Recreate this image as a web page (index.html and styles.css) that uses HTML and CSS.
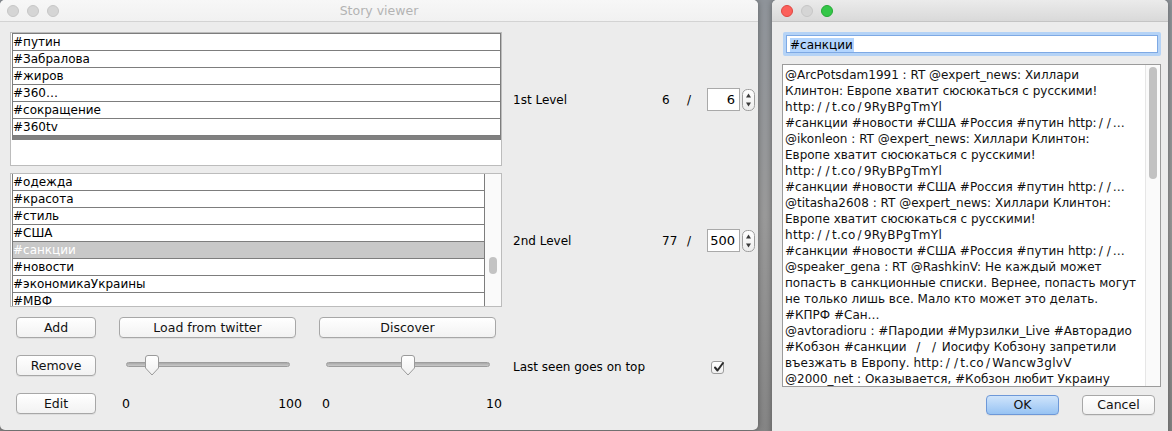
FILE: index.html
```html
<!DOCTYPE html>
<html>
<head>
<meta charset="utf-8">
<link rel="stylesheet" href="styles.css">
</head>
<body>
<div class="desktop">
  <div class="window main">
    <div class="titlebar">
      <div class="lights">
        <span class="light gray"></span><span class="light gray"></span><span class="light gray"></span>
      </div>
      <div class="title">Story viewer</div>
    </div>
    <div class="main-body">
      <div class="top-grid">
        <div class="list list-top">
          <div class="table">
            <div class="row">#путин</div>
            <div class="row">#Забралова</div>
            <div class="row">#жиров</div>
            <div class="row">#360…</div>
            <div class="row">#сокращение</div>
            <div class="row">#360tv</div>
            <div class="thick"></div>
          </div>
        </div>
        <div class="level">
          <span class="level-label">1st Level</span>
          <span class="level-num">6</span>
          <span class="level-slash">/</span>
          <span class="spin-field">6</span>
          <span class="spin-arrows"><svg width="13" height="22" viewBox="0 0 13 22"><rect x="0.5" y="0.5" width="12" height="21" rx="5" ry="5" fill="url(#sg1)" stroke="#9d9d9d"/><defs><linearGradient id="sg1" x1="0" y1="0" x2="0" y2="1"><stop offset="0" stop-color="#ffffff"/><stop offset="1" stop-color="#ececec"/></linearGradient></defs><path d="M6.5 4.5 L9 8.5 H4 Z" fill="#3a3a3a"/><path d="M6.5 17.5 L9 13.5 H4 Z" fill="#3a3a3a"/></svg></span>
        </div>
        <div class="list list-bottom">
          <div class="table table-scroll">
            <div class="row">#одежда</div>
            <div class="row">#красота</div>
            <div class="row">#стиль</div>
            <div class="row">#США</div>
            <div class="row selected">#санкции</div>
            <div class="row">#новости</div>
            <div class="row">#экономикаУкраины</div>
            <div class="row">#МВФ</div>
          </div>
          <div class="vscroll"><div class="vthumb"></div></div>
        </div>
        <div class="level">
          <span class="level-label">2nd Level</span>
          <span class="level-num">77</span>
          <span class="level-slash">/</span>
          <span class="spin-field">500</span>
          <span class="spin-arrows"><svg width="13" height="22" viewBox="0 0 13 22"><rect x="0.5" y="0.5" width="12" height="21" rx="5" ry="5" fill="url(#sg2)" stroke="#9d9d9d"/><defs><linearGradient id="sg2" x1="0" y1="0" x2="0" y2="1"><stop offset="0" stop-color="#ffffff"/><stop offset="1" stop-color="#ececec"/></linearGradient></defs><path d="M6.5 4.5 L9 8.5 H4 Z" fill="#3a3a3a"/><path d="M6.5 17.5 L9 13.5 H4 Z" fill="#3a3a3a"/></svg></span>
        </div>
      </div>
      <div class="controls">
        <div class="cell"><button class="btn w80">Add</button></div>
        <div class="cell"><button class="btn w177">Load from twitter</button></div>
        <div class="cell"><button class="btn w177">Discover</button></div>
        <div class="cell"></div>

        <div class="cell"><button class="btn w80">Remove</button></div>
        <div class="cell"><div class="slider"><div class="track"></div><svg class="thumb" style="left:26px" width="14" height="21" viewBox="0 0 14 21"><defs><linearGradient id="tg1" x1="0" y1="0" x2="0" y2="1"><stop offset="0" stop-color="#ffffff"/><stop offset="1" stop-color="#f0f0f0"/></linearGradient></defs><path d="M0.5 3 Q0.5 0.5 3 0.5 H11 Q13.5 0.5 13.5 3 V13 L7 20 L0.5 13 Z" fill="url(#tg1)" stroke="#9a9a9a"/></svg></div></div>
        <div class="cell"><div class="slider"><div class="track"></div><svg class="thumb" style="left:82px" width="14" height="21" viewBox="0 0 14 21"><defs><linearGradient id="tg2" x1="0" y1="0" x2="0" y2="1"><stop offset="0" stop-color="#ffffff"/><stop offset="1" stop-color="#f0f0f0"/></linearGradient></defs><path d="M0.5 3 Q0.5 0.5 3 0.5 H11 Q13.5 0.5 13.5 3 V13 L7 20 L0.5 13 Z" fill="url(#tg2)" stroke="#9a9a9a"/></svg></div></div>
        <div class="cell check-cell">
          <span class="check-label">Last seen goes on top</span>
          <span class="checkbox"><svg width="13" height="13" viewBox="0 0 13 13"><path d="M3 6.5 L5.5 9.5 L11 2" fill="none" stroke="#2b2b2b" stroke-width="2" stroke-linecap="round" stroke-linejoin="round"/></svg></span>
        </div>

        <div class="cell"><button class="btn w80">Edit</button></div>
        <div class="cell"><div class="ticks"><span>0</span><span>100</span></div></div>
        <div class="cell"><div class="ticks"><span>0</span><span>10</span></div></div>
        <div class="cell"></div>
      </div>
    </div>
  </div>

  <div class="window dialog">
    <div class="titlebar active">
      <div class="lights dlg">
        <span class="light red"></span><span class="light gray"></span><span class="light green"></span>
      </div>
    </div>
    <div class="dialog-body">
      <div class="search"><span class="sel">#санкции</span></div>
      <div class="textarea">
        <div class="lines">
          <div>@ArcPotsdam1991 : RT @expert_news: Хиллари</div>
          <div>Клинтон: Европе хватит сюсюкаться с русскими!</div>
          <div><span class="url">http:<span class="sl">/</span><span class="sl">/</span>t.co<span class="sl">/</span>9RyBPgTmYl</span></div>
          <div>#санкции #новости #США #Россия #путин http:<span class="sl">/</span><span class="sl">/</span>…</div>
          <div>@ikonleon : RT @expert_news: Хиллари Клинтон:</div>
          <div>Европе хватит сюсюкаться с русскими!</div>
          <div><span class="url">http:<span class="sl">/</span><span class="sl">/</span>t.co<span class="sl">/</span>9RyBPgTmYl</span></div>
          <div>#санкции #новости #США #Россия #путин http:<span class="sl">/</span><span class="sl">/</span>…</div>
          <div>@titasha2608 : RT @expert_news: Хиллари Клинтон:</div>
          <div>Европе хватит сюсюкаться с русскими!</div>
          <div><span class="url">http:<span class="sl">/</span><span class="sl">/</span>t.co<span class="sl">/</span>9RyBPgTmYl</span></div>
          <div>#санкции #новости #США #Россия #путин http:<span class="sl">/</span><span class="sl">/</span>…</div>
          <div>@speaker_gena : RT @RashkinV: Не каждый может</div>
          <div>попасть в санкционные списки. Вернее, попасть могут</div>
          <div>не только лишь все. Мало кто может это делать.</div>
          <div>#КПРФ #Сан…</div>
          <div>@avtoradioru : #Пародии #Мурзилки_Live #Авторадио</div>
          <div>#Кобзон #санкции &nbsp;<span class="sl">/</span> &nbsp;<span class="sl">/</span> Иосифу Кобзону запретили</div>
          <div>въезжать в Европу. <span class="url">http:<span class="sl">/</span><span class="sl">/</span>t.co<span class="sl">/</span>Wancw3glvV</span></div>
          <div>@2000_net : Оказывается, #Кобзон любит Украину</div>
        </div>
        <div class="tscroll"><div class="tthumb"></div></div>
      </div>
      <div class="dlg-buttons">
        <button class="btn default">OK</button>
        <button class="btn cancel">Cancel</button>
      </div>
    </div>
  </div>
</div>
</body>
</html>
```

FILE: styles.css
```css
* { box-sizing: border-box; }
html, body { margin: 0; padding: 0; }
body {
  width: 1172px;
  height: 431px;
  overflow: hidden;
  font-family: "DejaVu Sans", "Noto Sans", sans-serif;
  font-size: 12px;
  color: #000;
  background: linear-gradient(180deg, #8f949a 0%, #9a9a9a 50%, #858585 100%);
}
.desktop {
  display: flex;
  gap: 14px;
  height: 431px;
}
.window {
  background: #ececec;
  border-radius: 5px;
  overflow: hidden;
  box-shadow: 0 0 6px rgba(0,0,0,0.35);
}
.main { width: 758px; height: 430px; flex: none; }
.dialog { width: 396px; height: 440px; flex: none; }
.titlebar {
  height: 22px;
  position: relative;
  background: linear-gradient(180deg, #f7f7f7, #f1f1f1);
  border-bottom: 1px solid #d3d3d3;
}
.titlebar.active {
  background: linear-gradient(180deg, #ebebeb, #d9d9d9);
  border-bottom: 1px solid #c4c4c4;
}
.lights {
  display: flex;
  gap: 8px;
  padding: 5px 0 0 7px;
}
.lights.dlg { padding-left: 9px; }
.light {
  width: 12px; height: 12px;
  border-radius: 50%;
  display: block;
}
.light.gray { background: #d5d5d5; border: 1px solid #c6c6c6; }
.light.red { background: #fc605b; border: 1px solid #de4741; }
.light.green { background: #34c748; border: 1px solid #25a935; }
.title {
  position: absolute;
  left: 0; right: 0; top: 3px;
  text-align: center;
  font-size: 12.5px;
  color: #b3b3b3;
}

.main-body { padding: 10px 0 0 10px; }
.top-grid {
  display: grid;
  grid-template-columns: 492px 1fr;
  column-gap: 11px;
  row-gap: 7px;
}
.list {
  height: 134px;
  background: #fff;
  border: 1px solid #bcbcbc;
  padding-left: 1px;
  overflow: hidden;
}
.list-bottom { display: flex; }
.table {
  border-left: 1px solid #7d7d7d;
  border-right: 1px solid #7d7d7d;
  border-top: 1px solid #7d7d7d;
  font-size: 12px;
}
.table-scroll { flex: 1; border-top: none; }
.row {
  height: 17px;
  line-height: 16px;
  border-bottom: 1px solid #7d7d7d;
  white-space: nowrap;
}
.row.selected { background: #c8c8c8; color: #fff; }
.thick { height: 4px; background: #808080; margin-top: 0; }
.vscroll {
  width: 16px;
  background: #fafafa;
  position: relative;
}
.vthumb {
  position: absolute;
  left: 4px; top: 83px;
  width: 8px; height: 17px;
  border-radius: 4px;
  background: #c3c3c3;
}

.level {
  display: flex;
  align-items: center;
  font-size: 12px;
  padding-top: 1px;
}
.level-label { width: 149px; }
.level-num { width: 25px; }
.level-slash { width: 20px; }
.spin-field {
  width: 33px; height: 23px;
  background: #fff;
  border: 1px solid #a9a9a9;
  text-align: right;
  padding-right: 4px;
  line-height: 21px;
  font-size: 13px;
}
.spin-arrows { margin-left: 2px; display: flex; }

.controls {
  display: grid;
  grid-template-columns: 103px 200px 194px 1fr;
  grid-template-rows: 21px 21px 21px;
  row-gap: 17px;
  margin-top: 10px;
  margin-left: 6px;
}
.cell { display: flex; align-items: center; position: relative; }
.btn {
  font-family: "DejaVu Sans", "Noto Sans", sans-serif;
  font-size: 12.5px;
  color: #111;
  height: 21px;
  padding: 0;
  border: 1px solid #a7a7a7;
  border-radius: 4px;
  background: linear-gradient(180deg, #ffffff, #f2f2f2);
  box-shadow: 0 1px 0 rgba(0,0,0,0.06);
  line-height: 18px;
}
.w80 { width: 80px; }
.w177 { width: 177px; }
.slider {
  position: relative;
  width: 177px;
  height: 21px;
}
.track {
  position: absolute;
  left: 7px; top: 7px;
  width: 164px; height: 5px;
  border-radius: 3px;
  background: linear-gradient(180deg, #a9a9a9, #c9c9c9);
  border: 1px solid #9d9d9d;
}
.thumb { position: absolute; top: 0; }
.check-cell { font-size: 12px; padding-top: 3px; }
.check-label { width: 198px; }
.checkbox {
  width: 13px; height: 13px;
  border: 1px solid #9c9c9c;
  border-radius: 3px;
  background: linear-gradient(180deg, #ffffff, #f0f0f0);
  display: flex;
  position: relative;
}
.checkbox svg { position: absolute; left: 0; top: -1px; }
.ticks {
  width: 183px;
  padding-left: 3px;
  display: flex;
  justify-content: space-between;
  font-size: 12.5px;
}

.dialog-body { padding: 10px 7px 0 10px; }
.search {
  margin-left: 1px;
  height: 24px;
  border: 3px solid #b5d3f6;
  border-radius: 2px;
  background: #fff;
  box-shadow: inset 0 0 0 1px #7ea9e4;
  padding: 2px 0 0 4px;
  font-size: 12px;
  line-height: 16px;
}
.sel { background: #b3d5fe; padding-right: 1px; }
.textarea {
  margin-top: 8px;
  height: 323px;
  border: 1px solid #9b9b9b;
  background: #fff;
  display: flex;
  overflow: hidden;
}
.lines {
  flex: 1;
  padding: 2px 0 0 2px;
  line-height: 16px;
  font-size: 12px;
  white-space: nowrap;
  overflow: hidden;
  color: #111;
}
.url { letter-spacing: 0.3px; }
.sl { margin: 0 2px; }
.tscroll {
  width: 15px;
  background: #fafafa;
  border-left: 1px solid #e6e6e6;
  position: relative;
}
.tthumb {
  position: absolute;
  left: 3px; top: 2px;
  width: 8px; height: 112px;
  border-radius: 4px;
  background: #c2c2c2;
}
.dlg-buttons {
  display: flex;
  justify-content: flex-end;
  gap: 23px;
  padding-right: 6px;
  margin-top: 8px;
}
.dlg-buttons .btn { width: 73px; height: 20px; }
.btn.default {
  background: linear-gradient(180deg, #cfe4fb, #97c3f3);
  border-color: #6d98d8;
}
```
